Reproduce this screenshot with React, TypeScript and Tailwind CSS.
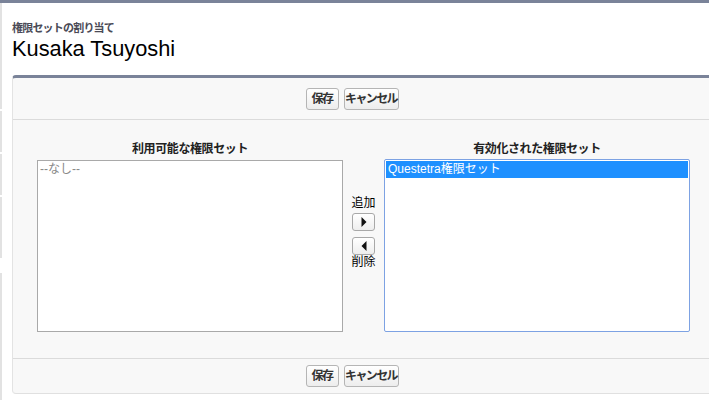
const jp = { fontFamily: '"Liberation Sans", "Noto Sans CJK JP", sans-serif' };

const ActionButton = ({ label, w }: { label: string; w: string }) => (
    <button
        className={`${w} h-[22px] rounded-[3px] border border-[#b5b5b5] bg-gradient-to-b from-white to-[#ededed] text-[12px] font-bold text-[#333] leading-none tracking-[-1.6px] flex items-center justify-center`}
        style={jp}
    >
        {label}
    </button>
);

const ButtonRow = () => (
    <div className="w-[678px] flex justify-center gap-[5px]">
        <ActionButton label="保存" w="w-[33px]" />
        <ActionButton label="キャンセル" w="w-[55px]" />
    </div>
);

const ArrowButton = ({ dir }: { dir: 'left' | 'right' }) => (
    <button className="w-[23px] h-[18px] rounded-[3px] border border-[#a8a8a8] bg-gradient-to-b from-white to-[#eeeeee] flex items-center justify-center">
        <svg width="6" height="10" viewBox="0 0 6 10">
            {dir === 'right' ? <path d="M0.5 0 L5.5 5 L0.5 10 Z" fill="#111" /> : <path d="M5.5 0 L0.5 5 L5.5 10 Z" fill="#111" />}
        </svg>
    </button>
);

const stripSegments = [
    { top: 0, h: 106 },
    { top: 2, h: 41 },
    { top: 2, h: 41 },
    { top: 2, h: 61 },
    { top: 15, h: 130 },
];

export default function App() {
    return (
        <div className="w-[709px] h-[400px] bg-white overflow-hidden" style={jp}>
            <div className="h-[3px] bg-[#7a8399]" />
            <div className="flex">
                <div className="w-[2px] shrink-0 flex flex-col">
                    {stripSegments.map((s, i) => (
                        <div key={i} className="bg-[#e2e2e2]" style={{ marginTop: s.top, height: s.h }} />
                    ))}
                </div>
                <div className="ml-[10px] shrink-0 w-[700px]">
                    <div className="pt-[18px] h-[72px]">
                        <div className="text-[11px] font-bold text-[#4a4a56] leading-[14px] tracking-[-0.8px]">権限セットの割り当て</div>
                        <div className="text-[21.8px] text-black leading-[24px] mt-[2px]">Kusaka Tsuyoshi</div>
                    </div>
                    <div className="w-[710px] h-[319px] border-t-[3px] border-t-[#7a8399] border-l border-l-[#e3e3e3] border-b border-b-[#e0e0e0] rounded-tl-[4px] rounded-bl-[4px] bg-[#f8f8f8] flex flex-col">
                        <div className="h-[42px] border-b border-[#dbdbdb] flex items-center">
                            <ButtonRow />
                        </div>
                        <div className="h-[238px] flex pl-[24px] pt-[21px]">
                            <div className="w-[306px] flex flex-col">
                                <div className="h-[19px] text-center text-[12px] font-bold text-[#222] leading-[16px] tracking-[-0.4px]">利用可能な権限セット</div>
                                <div className="h-[172px] border border-[#a9a9a9] bg-white">
                                    <div className="px-[2px] text-[12px] text-[#888] leading-[16px]">--なし--</div>
                                </div>
                            </div>
                            <div className="w-[41px] flex flex-col items-center pt-[55px]">
                                <div className="text-[12px] text-black leading-[15px]">追加</div>
                                <div className="mt-[2px] flex flex-col gap-[6px]">
                                    <ArrowButton dir="right" />
                                    <ArrowButton dir="left" />
                                </div>
                                <div className="text-[12px] text-black leading-[15px]">削除</div>
                            </div>
                            <div className="w-[306px] flex flex-col">
                                <div className="h-[18px] text-center text-[12px] font-bold text-[#222] leading-[16px] tracking-[-0.4px]">有効化された権限セット</div>
                                <div className="h-[173px] border border-[#7da2e3] rounded-[2px] bg-white p-px">
                                    <div className="h-[17px] bg-[#1e90ff] text-white text-[12px] leading-[17px] px-[2px]">Questetra権限セット</div>
                                </div>
                            </div>
                        </div>
                        <div className="flex-1 border-t border-[#dbdbdb] flex items-center">
                            <ButtonRow />
                        </div>
                    </div>
                </div>
            </div>
        </div>
    );
}
